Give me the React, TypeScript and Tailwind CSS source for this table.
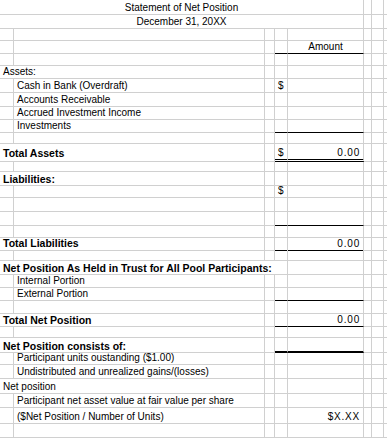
import React from 'react';

type Line = 'single' | 'double' | 'thick';

interface SheetRow {
  h: string;
  kind: 'title' | 'head' | 'item' | 'blank';
  text?: string;
  bold?: boolean;
  wide?: boolean;
  dollar?: boolean;
  amount?: string;
  center?: boolean;
  line?: Line;
}

const rows: SheetRow[] = [
  { h: 'h-[15px]', kind: 'title', text: 'Statement of Net Position' },
  { h: 'h-[14px]', kind: 'title', text: 'December 31, 20XX' },
  { h: 'h-[12px]', kind: 'blank' },
  { h: 'h-[13px]', kind: 'blank', amount: 'Amount', center: true, line: 'single' },
  { h: 'h-[12px]', kind: 'blank' },
  { h: 'h-[13px]', kind: 'head', text: 'Assets:' },
  { h: 'h-[14px]', kind: 'item', text: 'Cash in Bank (Overdraft)', dollar: true },
  { h: 'h-[14px]', kind: 'item', text: 'Accounts Receivable' },
  { h: 'h-[13px]', kind: 'item', text: 'Accrued Investment Income' },
  { h: 'h-[13px]', kind: 'item', text: 'Investments', line: 'single' },
  { h: 'h-[11px]', kind: 'blank' },
  { h: 'h-[18px]', kind: 'head', text: 'Total Assets', bold: true, dollar: true, amount: '0.00', line: 'double' },
  { h: 'h-[10px]', kind: 'blank' },
  { h: 'h-[14px]', kind: 'head', text: 'Liabilities:', bold: true },
  { h: 'h-[12px]', kind: 'blank', dollar: true },
  { h: 'h-[14px]', kind: 'blank' },
  { h: 'h-[14px]', kind: 'blank', line: 'single' },
  { h: 'h-[12px]', kind: 'blank' },
  { h: 'h-[12px]', kind: 'head', text: 'Total Liabilities', bold: true, amount: '0.00', line: 'single' },
  { h: 'h-[11px]', kind: 'blank' },
  { h: 'h-[14px]', kind: 'head', text: 'Net Position As Held in Trust for All Pool Participants:', bold: true, wide: true },
  { h: 'h-[13px]', kind: 'item', text: 'Internal Portion' },
  { h: 'h-[13px]', kind: 'item', text: 'External Portion', line: 'single' },
  { h: 'h-[13px]', kind: 'blank' },
  { h: 'h-[13px]', kind: 'head', text: 'Total Net Position', bold: true, amount: '0.00', line: 'single' },
  { h: 'h-[11px]', kind: 'blank' },
  { h: 'h-[15px]', kind: 'head', text: 'Net Position consists of:', bold: true, line: 'thick' },
  { h: 'h-[11px]', kind: 'item', text: 'Participant units oustanding ($1.00)' },
  { h: 'h-[15px]', kind: 'item', text: 'Undistributed and unrealized gains/(losses)' },
  { h: 'h-[15px]', kind: 'head', text: 'Net position' },
  { h: 'h-[14px]', kind: 'item', text: 'Participant net asset value at fair value per share' },
  { h: 'h-[16px]', kind: 'item', text: '($Net Position / Number of Units)', amount: '$X.XX' },
  { h: 'h-[14px]', kind: 'blank' },
];

const cell = 'border-r border-b border-[#d0d0d0]';

const lineClass = (line?: Line) => {
  if (line === 'single') return 'border-r border-r-[#d0d0d0] border-b border-b-black';
  if (line === 'double') return 'border-r border-r-[#d0d0d0] border-b-[3px] border-double border-b-black';
  if (line === 'thick') return 'border-r border-r-[#d0d0d0] border-b-2 border-b-black';
  return cell;
};

const Row: React.FC<{ row: SheetRow }> = ({ row }) => {
  const textCls = row.bold ? 'text-[10.5px] font-bold' : 'text-[10px]';
  // the double underline is 3px tall, so lift the label to sit level with the amount
  const headPad = row.line === 'double' ? 'pb-[3px]' : 'pb-px';

  return (
    <div className={`grid grid-cols-[14px_251px_10px_13px_76px_8px_12px_1fr] ${row.h}`}>
      {row.kind === 'title' && (
        <div className={`col-span-5 flex items-end justify-center pb-px ${cell}`}>
          <span className="text-[10px] leading-none">{row.text}</span>
        </div>
      )}

      {row.kind === 'head' && (
        <div className={`${row.wide ? 'col-span-4' : 'col-span-2'} flex items-end ${headPad} pl-[3px] whitespace-nowrap ${cell}`}>
          <span className={`${textCls} leading-none`}>{row.text}</span>
        </div>
      )}

      {row.kind === 'item' && (
        <>
          <div className={cell} />
          <div className={`flex items-end pb-px pl-[3px] whitespace-nowrap ${cell}`}>
            <span className="text-[10px] leading-none">{row.text}</span>
          </div>
        </>
      )}

      {row.kind === 'blank' && (
        <>
          <div className={cell} />
          <div className={cell} />
        </>
      )}

      {row.kind !== 'title' && !row.wide && <div className={cell} />}

      {row.kind !== 'title' && !row.wide && (
        <div className={`flex items-end pb-px pl-[3px] ${lineClass(row.line)}`}>
          {row.dollar && <span className="text-[10px] leading-none">$</span>}
        </div>
      )}

      {row.kind !== 'title' && (
        <div
          className={`flex items-end pb-px ${row.center ? 'justify-center' : 'justify-end pr-[3px]'} ${lineClass(row.line)}`}
        >
          {row.amount && (
            <span className={`text-[10px] leading-none ${row.center ? '' : 'tracking-[0.8px]'}`}>{row.amount}</span>
          )}
        </div>
      )}

      <div className={cell} />
      <div className={cell} />
      <div className="border-b border-[#d0d0d0]" />
    </div>
  );
};

const App: React.FC = () => {
  return (
    <main className="w-[387px] h-[438px] overflow-hidden bg-white text-black font-['Liberation_Sans',Arial,sans-serif]">
      {rows.map((row, i) => (
        <Row key={i} row={row} />
      ))}
    </main>
  );
};

export default App;
